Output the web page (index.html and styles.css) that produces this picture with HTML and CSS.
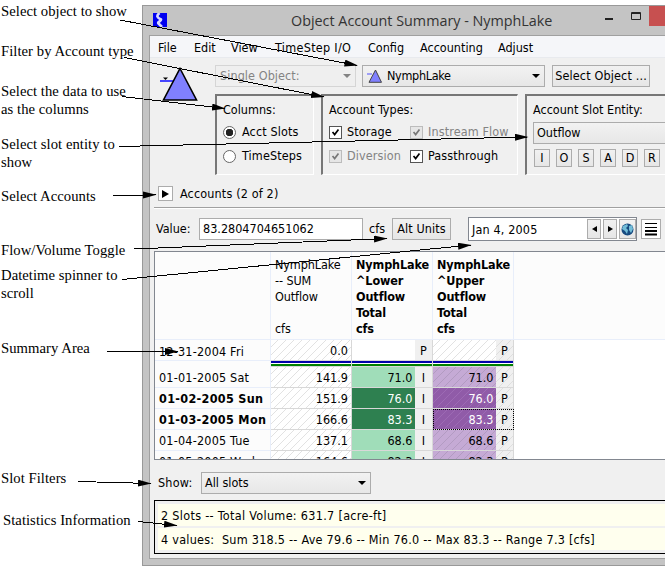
FILE: index.html
```html
<!DOCTYPE html>
<html lang="en">
<head>
<meta charset="utf-8">
<title>Object Account Summary - NymphLake</title>
<link rel="stylesheet" href="styles.css">
</head>
<body>
<div class="page">
  <aside class="notes">
    <p class="n1">Select object to show</p>
    <p class="n2">Filter by Account type</p>
    <p class="n3">Select the data to use<br>as the columns</p>
    <p class="n4">Select slot entity to<br>show</p>
    <p class="n5">Select Accounts</p>
    <p class="n6">Flow/Volume Toggle</p>
    <p class="n7">Datetime spinner to<br>scroll</p>
    <p class="n8">Summary Area</p>
    <p class="n9">Slot Filters</p>
    <p class="n10">Statistics Information</p>
  </aside>
  <main class="window">
    <header class="titlebar">
      <svg class="logo" width="14" height="14" viewBox="0 0 14 14"><rect width="14" height="14" fill="#0000f0"/><path d="M6.500 0C3 3 4 4.500 8 6.500 8.500 8 4 9 5.500 10.500L9 14" fill="none" stroke="#d8d8ff" stroke-width="2.600"/></svg>
      <h1>Object Account Summary - NymphLake</h1>
      <svg class="controls" width="60" height="30" viewBox="0 0 60 30"><path d="M0 13h8" stroke="#222" stroke-width="2"/><path d="M26.500 6.500h9v7h-9zM26 7.500h10" fill="none" stroke="#222"/><path d="M44 0h16v20H44z" fill="#c75050"/></svg>
    </header>
    <div class="client">
      <nav class="menu"><span>File</span><span>Edit</span><span>View</span><span>TimeStep I/O</span><span>Config</span><span>Accounting</span><span>Adjust</span></nav>
      <section class="top">
        <svg class="object" width="38" height="36" viewBox="0 0 38 36"><path d="M0 15h13" stroke="#4646ff" stroke-width="2"/><path d="M3 11.500h5L5.500 14z" fill="#000"/><path d="M20 2.500 36.500 34H3.500z" fill="#8080ff" stroke="#000" stroke-width="1.600"/></svg>
        <div class="pickers">
          <div class="combo off"><span>Single Object:</span><i class="down"></i></div>
          <div class="combo lake"><svg width="16" height="14" viewBox="0 0 16 14"><path d="M0 5h5" stroke="#5050ff"/><path d="M8.500 1 14.500 13.300H2z" fill="#8080ff" stroke="#444"/></svg><span>NymphLake</span><i class="down"></i></div>
          <button class="select">Select Object ...</button>
        </div>
        <div class="groups">
          <fieldset><b>Columns:</b>
            <label><i class="radio on"></i>Acct Slots</label>
            <label><i class="radio"></i>TimeSteps</label>
          </fieldset>
          <fieldset><b>Account Types:</b>
            <div class="checks">
              <label><i class="check"><svg viewBox="0 0 13 13"><path d="m3 6 2.500 3L10 3"/></svg></i>Storage</label>
              <label class="dis"><i class="check"><svg viewBox="0 0 13 13"><path d="m3 6 2.500 3L10 3"/></svg></i>Instream Flow</label>
              <label class="dis"><i class="check"><svg viewBox="0 0 13 13"><path d="m3 6 2.500 3L10 3"/></svg></i>Diversion</label>
              <label><i class="check"><svg viewBox="0 0 13 13"><path d="m3 6 2.500 3L10 3"/></svg></i>Passthrough</label>
            </div>
          </fieldset>
          <fieldset class="entity"><b>Account Slot Entity:</b>
            <div class="combo">Outflow</div>
            <div class="letters"><button>I</button><button>O</button><button>S</button><button>A</button><button>D</button><button>R</button></div>
          </fieldset>
        </div>
      </section>
      <section class="accounts"><button><i></i></button><span>Accounts (2 of 2)</span></section>
      <section class="value">
        <span class="vlabel">Value:</span><div class="field">83.2804704651062</div><span class="unit">cfs</span><button class="alt">Alt Units</button>
        <div class="date"><span>Jan 4, 2005</span>
          <button><i class="left"></i></button><button><i class="right"></i></button>
          <button class="globe"><svg width="13" height="13" viewBox="0 0 13 13"><circle cx="6.500" cy="6.500" r="6" fill="#174a80"/><path d="M2 3 6 1l1 2-2 2 2 2-1 4-2-3-3-2zM8 3l3-1 1 4-2 4-2-3z" fill="#72bdd8"/></svg></button>
        </div>
        <button class="list"><svg width="12" height="14" viewBox="0 0 12 14" stroke="#000"><path d="M0 1.500h12M0 5.500h12"/><path d="M0 9h12M0 12.500h12" stroke-width="2"/></svg></button>
      </section>
      <section class="table">
        <div class="row head"><span class="day"></span><div class="cell">NymphLake<br>-- SUM<br>Outflow<br><br>cfs</div><div class="cell strong">NymphLake<br>^Lower<br>Outflow<br>Total<br>cfs</div><div class="cell strong">NymphLake<br>^Upper<br>Outflow<br>Total<br>cfs</div></div>
        <div class="row first"><span class="day">12-31-2004 Fri</span><div class="num hatch">0.0</div><div class="pair"><em></em><u>P</u></div><div class="pair hatch"><em></em><u>P</u></div></div>
        <div class="rule"><span></span><i></i><i></i><i></i></div>
        <div class="row"><span class="day">01-01-2005 Sat</span><div class="num hatch">141.9</div><div class="pair green"><em>71.0</em><u>I</u></div><div class="pair violet hatch"><em>71.0</em><u>P</u></div></div>
        <div class="row"><span class="day strong">01-02-2005 Sun</span><div class="num hatch">151.9</div><div class="pair green deep"><em>76.0</em><u>I</u></div><div class="pair violet deep hatch"><em>76.0</em><u>P</u></div></div>
        <div class="row"><span class="day strong">01-03-2005 Mon</span><div class="num hatch">166.6</div><div class="pair green deep"><em>83.3</em><u>I</u></div><div class="pair violet deep hatch focus"><em>83.3</em><u>P</u></div></div>
        <div class="row"><span class="day">01-04-2005 Tue</span><div class="num hatch">137.1</div><div class="pair green"><em>68.6</em><u>I</u></div><div class="pair violet hatch"><em>68.6</em><u>P</u></div></div>
        <div class="row"><span class="day">01-05-2005 Wed</span><div class="num hatch">164.6</div><div class="pair green"><em>82.3</em><u>I</u></div><div class="pair violet hatch"><em>82.3</em><u>P</u></div></div>
      </section>
      <section class="show"><span>Show:</span><div class="combo"><span>All slots</span><i class="down"></i></div></section>
      <section class="stats"><p>2 Slots -- Total Volume: 631.7 [acre-ft]</p><p class="s2">4 values:&nbsp; Sum 318.5 -- Ave 79.6 -- Min 76.0 -- Max 83.3 -- Range 7.3 [cfs]</p></section>
    </div>
  </main>
  <svg class="arrows" width="667" height="568" viewBox="0 0 667 568">
    <defs><marker id="tip" markerWidth="14" markerHeight="8" refX="13" refY="3.500" orient="auto" markerUnits="userSpaceOnUse"><path d="M0 0 13.500 3.500 0 7z"/></marker></defs>
    <g fill="none" stroke="#000" marker-end="url(#tip)" shape-rendering="crispEdges">
      <path d="M120 20 357.500 65.500"/><path d="M124 57.500 324 97"/><path d="M122 96.500 225 108.500"/><path d="M119 146.500 528 137"/><path d="M113 195.500 156 194.800"/><path d="M134 249 387 238.500"/><path d="M122 279.500 471 245"/><path d="M107 351.500H178"/><path d="M78 481.500 151 483.500"/><path d="M138 521.500 177 525.500"/>
    </g>
  </svg>
</div>
</body>
</html>
```
FILE: styles.css
```css
* { box-sizing: border-box; }
body { margin: 0; background: #fff; color: #000; font: 12.5px/16px "DejaVu Sans Condensed", "DejaVu Sans", sans-serif; }
p, h1, fieldset { margin: 0; padding: 0; border: 0; }
button { font: inherit; color: #000; padding: 0; margin: 0; border: 1px solid #acacac; background: linear-gradient(#f1f1f1, #e6e6e6); display: flex; align-items: center; justify-content: center; flex: none; }
.page { position: relative; width: 667px; height: 568px; display: flex; overflow: hidden; }
.notes { width: 142px; padding: 3px 0 0 1px; font: 14.67px/17.5px "Liberation Serif", serif; letter-spacing: .05px; white-space: nowrap; }
.notes p { height: 17.5px; }
.notes .n2 { margin-top: 22.5px; }
.notes .n3 { margin-top: 22.5px; height: 35px; }
.notes .n4 { margin-top: 18px; height: 35px; }
.notes .n5 { margin-top: 16.5px; }
.notes .n6 { margin-top: 37px; }
.notes .n7 { margin-top: 7.5px; height: 35px; }
.notes .n8 { margin-top: 38px; }
.notes .n9 { margin-top: 112.500px; }
.notes .n10 { margin: 24.5px 0 0 2px; }
.window { width: 523px; height: 561px; margin-top: 5px; border: 1px solid #999; border-right: 0; background: #c4c4c4; padding: 0 0 6px 6px; display: flex; flex-direction: column; white-space: nowrap; }
.titlebar { height: 29px; display: flex; align-items: center; flex: none; }
.logo { margin: 0 0 1px 4px; flex: none; }
h1 { font: 14.35px/20px "Open Sans", sans-serif; width: 330px; margin-left: 124px; color: #333; }
.controls { margin-left: 13px; flex: none; width: 60px; align-self: flex-start; }
.client { flex: 1; background: #f0f0f0; border: solid #a0a0a0; border-width: 1px 0 1px 1px; overflow: hidden; }
.menu { height: 22px; background: #f5f6f9; border-bottom: 1px solid #e8eaee; padding: 4px 0 0 8px; display: grid; grid-template-columns: 36px 37px 44px 93px 52px 78px 60px; }
.menu span:nth-child(4) { letter-spacing: .3px; }
.top { display: grid; grid-template-columns: 55px 450px; grid-template-rows: 29px 81px; padding: 7px 0 0 10px; height: 117px; }
.object { grid-row: 1 / 3; margin-top: 1px; }
.pickers { display: flex; gap: 7px; }
.combo { height: 22px; border: 1px solid #acacac; background: linear-gradient(#f2f2f2, #e7e7e7); display: flex; align-items: center; padding: 0 4px; flex: none; }
.off { width: 141px; color: #838383; border-color: #d5d5d5; background: #efefef; letter-spacing: .08px; }
.lake { width: 183px; margin-left: -1px; letter-spacing: -.3px; }
.lake svg { margin-right: 4px; }
.select { width: 98px; height: 22px; letter-spacing: .15px; }
.down { border: 4px solid transparent; border-top-color: currentColor; border-bottom: 0; margin-left: auto; }
.groups { display: grid; grid-template-columns: 99px 197px 150px; gap: 7px; }
fieldset { min-width: 0; height: 81px; border: 1px solid #fff; border-top: 2px solid #777; border-left: 2px solid #777; padding: 6px 0 0 6px; }
fieldset b { font-weight: 400; display: block; height: 18px; }
label { display: flex; align-items: center; height: 24px; letter-spacing: .12px; }
.radio { width: 13px; height: 13px; border: 1px solid #666; border-radius: 50%; background: #fff; margin-right: 6px; }
.on { background: radial-gradient(circle, #222 0 3.5px, #fff 4px); }
.checks { display: grid; grid-template-columns: 81px 110px; }
.check { width: 13px; height: 13px; border: 1px solid #555; background: #fff; margin-right: 5px; flex: none; display: flex; }
.check path { fill: none; stroke: #000; stroke-width: 2; }
.dis { color: #838383; }
.dis .check { border-color: #bcbcbc; background: #e6e6e6; }
.dis .check path { stroke: #777; }
.entity { border-right: 0; }
.entity .combo { height: 22px; margin-top: 2px; border-right: 0; padding-left: 3px; }
.letters { display: flex; gap: 6px; margin: 5px 0 0 1px; }
.letters button { width: 16px; height: 18px; }
.accounts { height: 33px; margin-left: 4px; padding: 11px 0 0 4px; display: flex; gap: 7px; border-bottom: 1px solid #a0a0a0; box-shadow: 0 1px #fff; }
.accounts button { width: 15px; height: 15px; background: #fff; }
.accounts i { border: 4px solid transparent; border-left: 7px solid #000; border-right: 0; }
.accounts span { letter-spacing: .15px; }
.value { display: flex; align-items: center; height: 43px; padding: 0 0 1px 6px; }
.vlabel { width: 43px; }
.field { width: 164px; height: 22px; border: 1px solid #acacac; background: #fff; padding: 2px 3px; }
.unit { width: 29px; padding-left: 6px; }
.alt { width: 59px; height: 22px; letter-spacing: .1px; }
.date { margin-left: 17px; width: 169px; height: 24px; border: 1px solid #828790; background: #fff; display: flex; gap: 2px; padding: 1px; }
.date span { width: 115px; padding: 3px 2px; letter-spacing: .15px; flex: none; }
.date button { width: 14px; height: 20px; }
.date .globe { width: 17px; }
.left, .right { border: 3.5px solid transparent; }
.left { border-right: 5px solid #000; border-left: 0; }
.right { border-left: 5px solid #000; border-right: 0; }
.list { width: 20px; height: 20px; background: #fff; margin-left: 4px; }
.table { height: 209px; margin-left: 4px; border: 1px solid #828790; border-right: 0; background: #fff; overflow: hidden; }
.row, .rule { display: grid; grid-template-columns: 116px 81px 81px 81px; }
.row { height: 21px; }
.row > * { border: solid #d8d8d8; border-width: 0 1px 1px 0; min-width: 0; }
.row .day { background: #fcfcfc; border-color: #e8eefa; padding: 3px 0 0 4px; letter-spacing: .2px; }
.row .day.strong { letter-spacing: .32px; }
.row.first .day { padding-top: 4px; }
.head { height: 88px; background: #fcfcfc; border-bottom: 1px solid #e8eefa; }
.head .cell, .head .day { border-color: #e8eefa; border-bottom: 0; }
.head .cell { padding: 5px 0 0 4px; letter-spacing: -.1px; }
.strong { font-weight: 700; }
.num { text-align: right; padding: 3px 3px 0 0; }
.pair { display: grid; grid-template-columns: 63px 17px; }
.pair em { font-style: normal; text-align: right; padding: 3px 2.5px 0 0; }
.pair u { text-decoration: none; text-align: center; padding-top: 3px; background: #f0f0f0; }
.hatch.num, .hatch em, .hatch u { background-image: repeating-linear-gradient(135deg, transparent 0 4.8px, #d8d8d8 5px 5.4px, transparent 5.657px); }
.green em { background: #a0ddb9; }
.green.deep em { background: #2e8050; color: #fff; }
.violet em { background-color: #c5aad5; }
.violet.hatch em { background-image: repeating-linear-gradient(135deg, transparent 0 4.8px, #ac96bb 5px 5.4px, transparent 5.657px); }
.violet.deep em { background-color: #905ba8; color: #fff; }
.violet.deep.hatch em { background-image: repeating-linear-gradient(135deg, transparent 0 4.8px, #a16fb8 5px 5.4px, transparent 5.657px); }
.focus { outline: 1px dotted #000; outline-offset: -1px; }
.rule { height: 6px; }
.rule span { background: #fcfcfc; border-right: 1px solid #e8eefa; }
.rule i { border-right: 1px solid #d8d8d8; background: linear-gradient(#00a 0 2px, #fff 2px 3px, #008000 3px 5px, #d8d8d8 5px); }
.show { display: flex; align-items: center; height: 40px; padding: 6px 0 0 8px; }
.show > span { width: 43px; letter-spacing: .2px; }
.show .combo { width: 170px; padding-left: 3px; }
.stats { margin-left: 4px; height: 54px; border: 1px solid #000; border-right: 0; padding: 3px 0 3px 3px; display: grid; gap: 2px; letter-spacing: .31px; }
.stats p { background: #ffffee; padding: 4px 3px 0; height: 22px; }
.stats .s2 { letter-spacing: .25px; }
.arrows { position: absolute; left: 0; top: 0; }
```
